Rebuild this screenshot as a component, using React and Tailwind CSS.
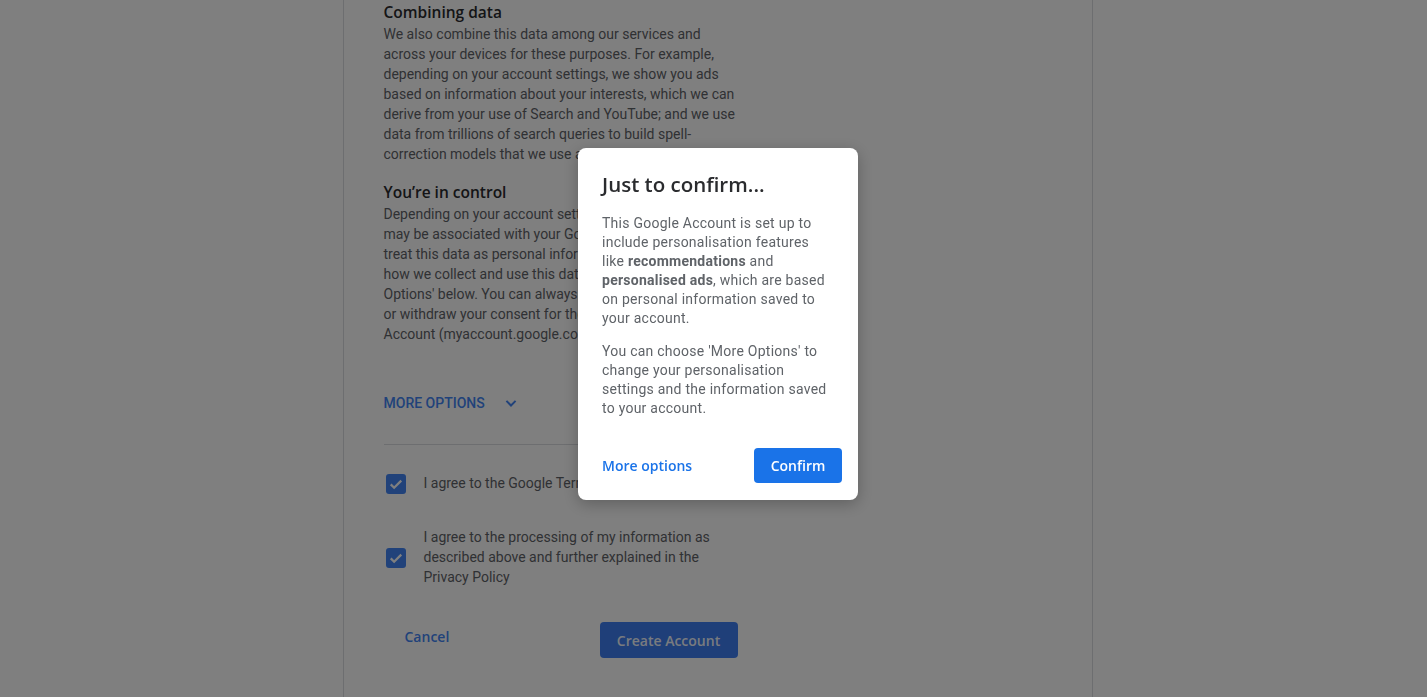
import React from "react";

const roboto = { fontFamily: "Roboto, 'Liberation Sans', Arial, sans-serif" };
const display = { fontFamily: "'Open Sans', Roboto, 'Liberation Sans', sans-serif" };

function CheckBox() {
    return (
        <span className="mt-[1px] flex h-5 w-5 shrink-0 items-center justify-center rounded-[3px] bg-[#4285f4]">
            <svg viewBox="0 0 24 24" className="h-[18px] w-[18px]" fill="none" stroke="white" strokeWidth="3">
                <path d="M5 12.5l4.5 4.5L19 7.5" />
            </svg>
        </span>
    );
}

function ConfirmDialog() {
    return (
        <div className="absolute left-[578px] top-[148px] w-[280px] rounded-lg bg-white shadow-[0_4px_16px_rgba(0,0,0,0.25)]" style={roboto}>
            <div className="px-6 pt-6">
                <h2 className="text-[20.5px] leading-6 font-semibold text-[#2a2b2e]" style={display}>
                    Just to confirm...
                </h2>
                <p className="mt-[18px] text-[14px] leading-[19px] tracking-[0.25px] text-[#5f6368]">
                    This Google Account is set up to include personalisation features like{" "}
                    <b className="font-bold">recommendations</b> and <b className="font-bold">personalised ads</b>,
                    which are based on personal information saved to your account.
                </p>
                <p className="mt-[14px] text-[14px] leading-[19px] tracking-[0.25px] text-[#5f6368]">
                    You can choose 'More Options' to change your personalisation settings and the information
                    saved to your account.
                </p>
            </div>
            <div className="mt-[30px] flex items-center justify-between pb-[17px] pl-6 pr-4" style={display}>
                <button type="button" className="text-[14px] font-semibold text-[#1a73e8]">
                    More options
                </button>
                <button type="button" className="h-[35px] w-[88px] rounded bg-[#1a73e8] text-[14px] font-semibold text-white">
                    Confirm
                </button>
            </div>
        </div>
    );
}

export default function App() {
    return (
        <div className="relative h-screen overflow-hidden bg-white" style={roboto}>
            <div className="flex justify-center pl-2">
                <div className="h-screen w-[750px] border-x border-[#dadce0] pl-10">
                    <div className="w-[356px]">
                        <h3 className="text-[15.5px] leading-6 font-semibold text-[#2a2b2e]" style={display}>
                            Combining data
                        </h3>
                        <p className="text-[14px] leading-5 text-[#5f6368]">
                            We also combine this data among our services and across your devices for these
                            purposes. For example, depending on your account settings, we show you ads based on
                            information about your interests, which we can derive from your use of Search and
                            YouTube; and we use data from trillions of search queries to build spell-correction
                            models that we use across all of our services.
                        </p>

                        <h3 className="mt-4 text-[15.5px] leading-6 font-semibold text-[#2a2b2e]" style={display}>
                            You’re in control
                        </h3>
                        <p className="text-[14px] leading-5 text-[#5f6368]">
                            Depending on your account settings, some of this data may be associated with your
                            Google Account and we treat this data as personal information. You can control how we
                            collect and use this data now by clicking 'More Options' below. You can always adjust
                            your controls later or withdraw your consent for the future by visiting My Account
                            (myaccount.google.com).
                        </p>

                        <button type="button" className="mt-[49px] flex items-center text-[14px] leading-5 font-medium uppercase text-[#4285f4]">
                            More options
                            <svg viewBox="0 0 24 24" className="ml-[16px] h-5 w-5" fill="none" stroke="currentColor" strokeWidth="2.4">
                                <path d="M6.5 9.5l5.5 5.5 5.5-5.5" />
                            </svg>
                        </button>

                        <div className="mt-[31px] h-px bg-[#dadce0]" />

                        <label className="mt-[28px] flex items-start gap-[18px] pl-[2px] text-[14px] leading-5 text-[#5f6368]">
                            <CheckBox />
                            <span>I agree to the Google Terms of Service</span>
                        </label>

                        <label className="mt-[33px] flex items-center gap-[18px] pl-[2px] text-[14px] leading-5 text-[#5f6368]">
                            <CheckBox />
                            <span>
                                I agree to the processing of my information as described above and further explained
                                in the Privacy Policy
                            </span>
                        </label>

                        <div className="mt-[35px] flex items-start">
                            <button type="button" className="ml-[21px] pt-[5px] text-[14px] leading-5 font-semibold text-[#4285f4]" style={display}>
                                Cancel
                            </button>
                            <button type="button" className="ml-auto mr-[2px] h-9 w-[138px] rounded bg-[#3f7ff2] text-[14px] font-semibold text-white/95" style={display}>
                                Create Account
                            </button>
                        </div>
                    </div>
                </div>
            </div>

            <div className="fixed inset-0 bg-black/50">
                <ConfirmDialog />
            </div>
        </div>
    );
}
